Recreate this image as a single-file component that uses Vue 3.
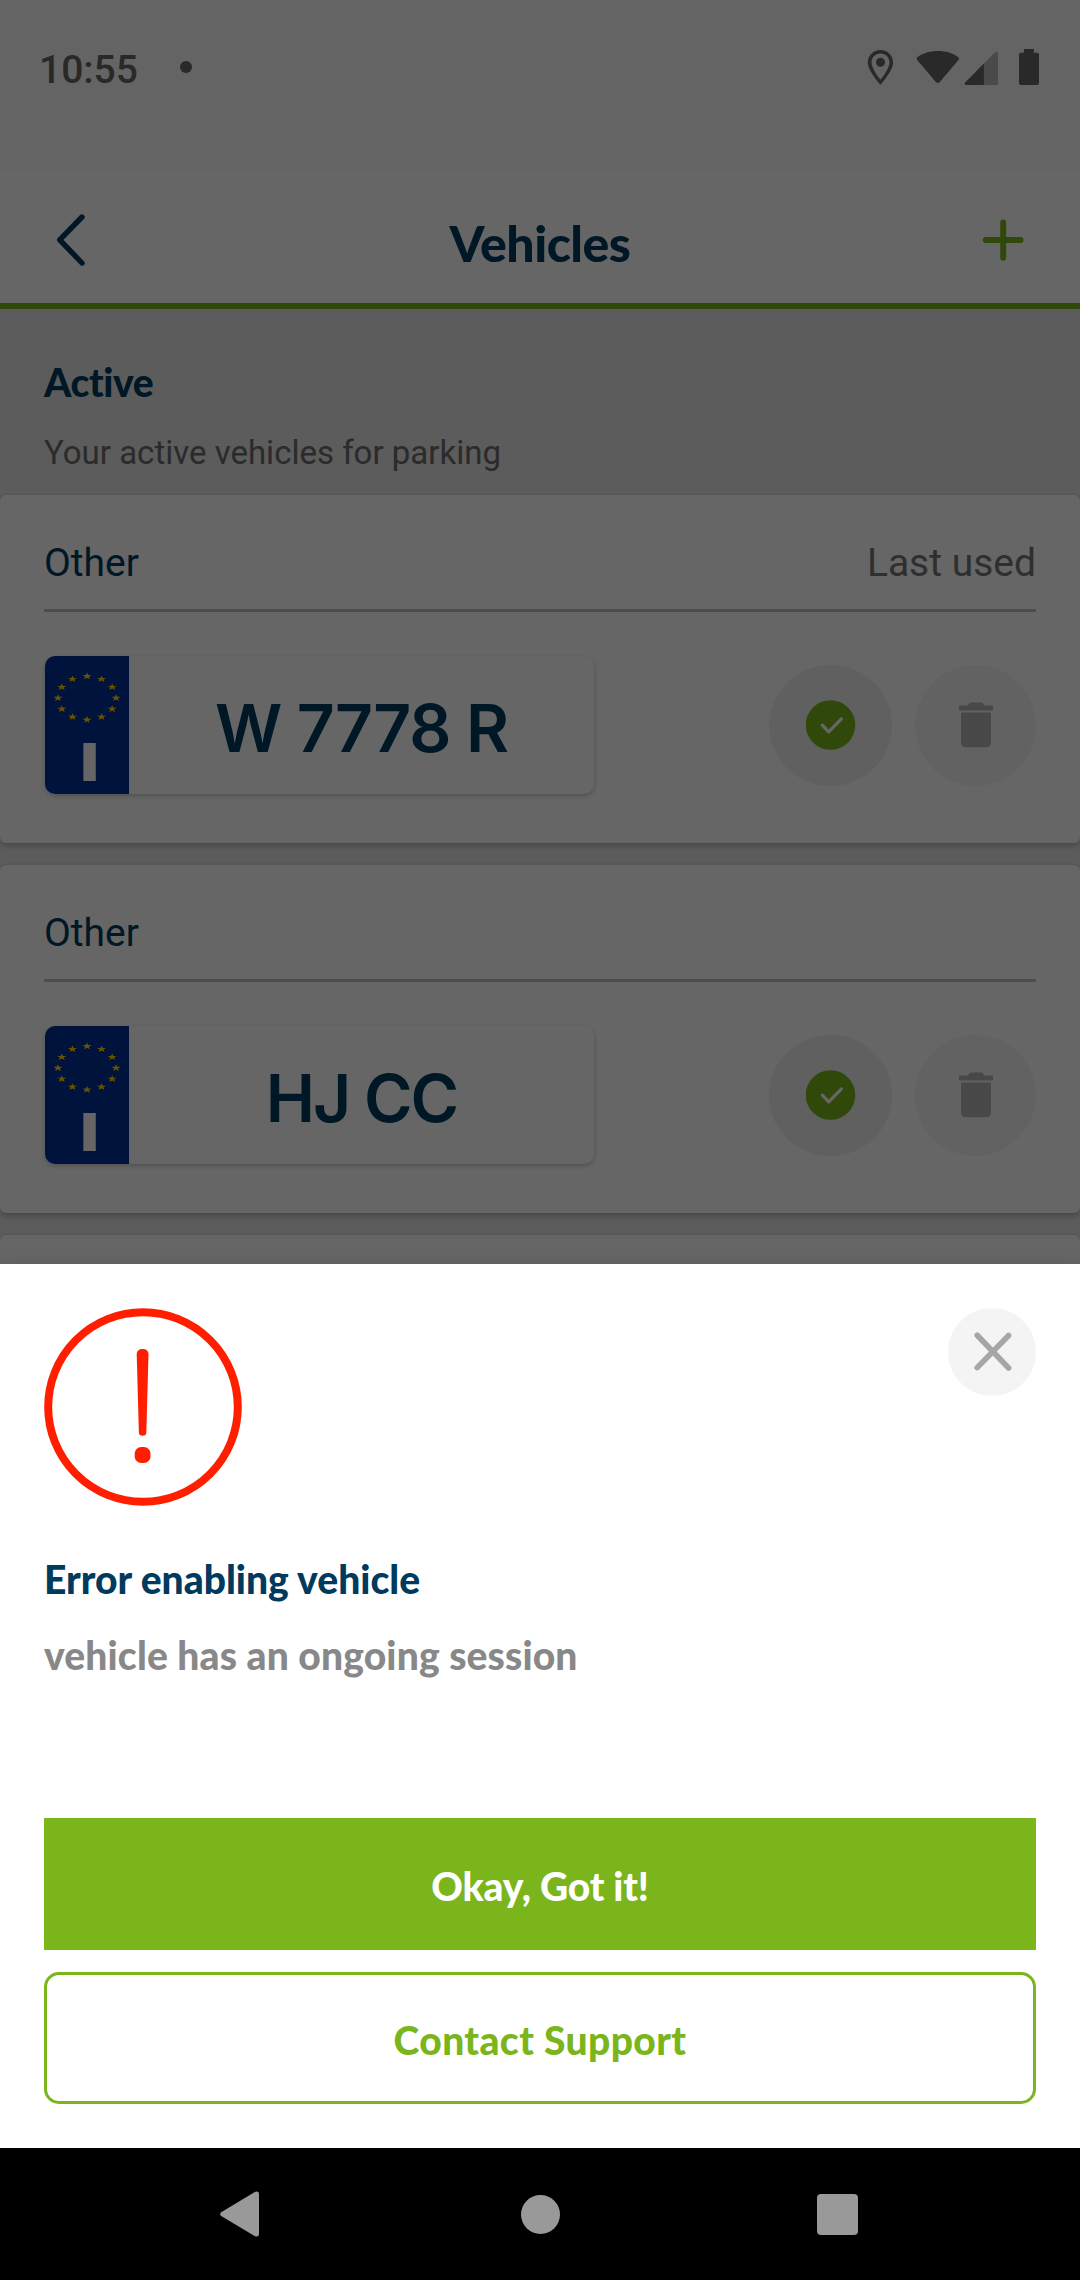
<script setup>
const vehicles = [
  { id: 1, label: 'Other', note: 'Last used', plate: 'W 7778 R', letter: '-1.1px' },
  { id: 2, label: 'Other', note: '', plate: 'HJ CC', letter: '-2px' }
]

const star = Array.from({ length: 10 }, (_, i) => {
  const r = i % 2 ? 1.5 : 3.7
  const a = (Math.PI / 5) * i - Math.PI / 2
  return `${(r * Math.cos(a)).toFixed(2)},${(r * Math.sin(a)).toFixed(2)}`
}).join(' ')

const stars = Array.from({ length: 12 }, (_, i) => {
  const a = (Math.PI / 6) * i
  return `translate(${(21.8 * Math.cos(a)).toFixed(2)} ${(21.8 * Math.sin(a)).toFixed(2)})`
})
</script>

<template>
  <div class="phone">
    <div class="screen">
      <div class="status">
        <div class="status-left">
          <span class="time">10:55</span>
          <i class="dot"></i>
        </div>
        <svg class="status-icons" width="180" height="44" viewBox="860 45 180 44">
          <path d="M880.5 50c-7 0-12.7 5.500-12.700 12.500 0 8.500 12.700 22.300 12.700 22.300s12.600-13.800 12.600-22.300c0-7-5.600-12.500-12.600-12.500zM880.500 53.600c5 0 9 4 9 8.900 0 5-5 12.200-9 17.300-4-5.100-9-12.300-9-17.300 0-4.900 4-8.900 9-8.900z" fill="#666" fill-rule="evenodd" />
          <circle cx="880.500" cy="62.200" r="4.500" fill="#666" />
          <path d="M917.300 57.200C928 49 948 49 958.300 57.200Q959.500 58.500 958.500 60L939.800 82Q937.800 84 935.800 82L917.200 60Q916 58.500 917.300 57.200Z" fill="#666" />
          <path d="M966 85Q963.800 84.500 965.200 82.400L994.800 52.400Q998 50.500 998 53.500V83.500Q998 85 996.500 85Z" fill="#b8b8b8" />
          <path d="M966 85Q963.800 84.500 965.200 82.400L983.900 63.500V85Z" fill="#666" />
          <path d="M1023.900 49h10v3.700h3.200q1.900 0 1.900 1.900v28.500q0 1.900-1.900 1.900h-16.200q-1.900 0-1.900-1.900V54.600q0-1.900 1.900-1.900h3z" fill="#666" />
        </svg>
      </div>

      <header class="header">
        <svg width="40" height="60" viewBox="50 210 40 60">
          <path d="M82 217L59.700 239.800L82 263" fill="none" stroke="#003a5d" stroke-width="5.400" stroke-linecap="round" stroke-linejoin="round" />
        </svg>
        <h1 class="title">Vehicles</h1>
        <svg width="60" height="60" viewBox="973 210 60 60">
          <path d="M985.800 240H1020.500M1003.200 222.500V257.700" fill="none" stroke="#79b51b" stroke-width="6" stroke-linecap="round" />
        </svg>
      </header>

      <section class="intro">
        <h2 class="intro-title">Active</h2>
        <p class="intro-text">Your active vehicles for parking</p>
      </section>

      <article v-for="v in vehicles" :key="v.id" class="card">
        <div class="card-head">
          <span class="label">{{ v.label }}</span>
          <span class="note">{{ v.note }}</span>
        </div>
        <div class="card-body">
          <div class="plate">
            <div class="band">
              <svg width="84" height="66" viewBox="-42 -33 84 66">
                <g transform="scale(1.333 1)">
                  <polygon v-for="(t, i) in stars" :key="i" :points="star" :transform="t" fill="#ffcc00" />
                </g>
              </svg>
              <span class="country">I</span>
            </div>
            <div class="number" :style="{ letterSpacing: v.letter }">{{ v.plate }}</div>
          </div>
          <div class="actions">
            <div class="round selected">
              <svg width="50" height="50" viewBox="0 0 50 50">
                <circle cx="24.500" cy="25" r="24.800" fill="#79b51b" />
                <path d="M16.300 25.200L22.700 31.800L35.400 18.900" fill="none" stroke="#fff" stroke-width="3.200" stroke-linecap="round" stroke-linejoin="round" />
              </svg>
            </div>
            <div class="round">
              <svg width="36" height="46" viewBox="0 0 36 46">
                <path d="M1 3.500H9.700L12.200 0.500H24L26.500 3.500H35V8.500H1ZM3 10.500H33V40.500Q33 45.300 28.200 45.300H7.800Q3 45.300 3 40.500Z" fill="#b4b4b4" />
              </svg>
            </div>
          </div>
        </div>
      </article>
      <article class="card next"></article>
    </div>

    <div class="scrim"></div>

    <section class="sheet">
      <div class="sheet-head">
        <svg width="198" height="198" viewBox="0 0 198 198">
          <circle cx="99" cy="99" r="94.800" fill="none" stroke="#ff1e00" stroke-width="8" />
          <path d="M92.700 46.500Q92.700 41 98.600 41Q104.500 41 104.500 46.500L102.300 125Q102 127.700 98.600 127.700Q95.200 127.700 94.900 125Z" fill="#ff1e00" />
          <rect x="90.700" y="139" width="15.800" height="16" rx="6.500" fill="#ff1e00" />
        </svg>
        <div class="close">
          <svg width="44" height="44" viewBox="970 1330 44 44">
            <path d="M977.200 1335.300L1008.600 1368M1008.600 1335.500L977.200 1367.600" fill="none" stroke="#a6a6a6" stroke-width="5.600" stroke-linecap="round" />
          </svg>
        </div>
      </div>
      <h2 class="error-title">Error enabling vehicle</h2>
      <p class="error-text">vehicle has an ongoing session</p>
      <div class="buttons">
        <button class="btn primary">Okay, Got it!</button>
        <button class="btn secondary">Contact Support</button>
      </div>
    </section>

    <nav class="nav">
      <svg width="40" height="46" viewBox="220 2191 40 46">
        <path d="M221.200 2212.300L254.800 2191.900Q259 2190.800 259 2194V2234Q259 2237.500 255 2236.200L221.200 2216Q219.300 2214.200 221.200 2212.300Z" fill="#999" />
      </svg>
      <i class="home"></i>
      <i class="recent"></i>
    </nav>
  </div>
</template>

<style>
body {
  margin: 0;
}
</style>

<style scoped>
.phone {
  position: relative;
  display: flex;
  flex-direction: column;
  width: 1080px;
  height: 2280px;
  overflow: hidden;
  background: #000;
  font-family: Roboto, sans-serif;
  font-variant-ligatures: none;
}

h1,
h2,
p {
  margin: 0;
}

svg {
  display: block;
}

.screen {
  height: 2148px;
  overflow: hidden;
  background: #e6e6e6;
}

.status {
  display: flex;
  justify-content: space-between;
  align-items: flex-start;
  box-sizing: border-box;
  height: 171px;
  padding: 45px 40px 0 39px;
  background: #fafafa;
}

.status-left {
  display: flex;
  gap: 42px;
  padding-top: 2px;
}

.time {
  color: #666;
  font-size: 39px;
  font-weight: 500;
  line-height: 46px;
}

.dot {
  width: 12px;
  height: 12px;
  margin-top: 14px;
  border-radius: 50%;
  background: #666;
}

.header {
  display: flex;
  justify-content: space-between;
  align-items: flex-start;
  box-sizing: border-box;
  height: 138px;
  padding: 39px 47px 0 50px;
  border-bottom: 6px solid #79b51b;
  background: #fff;
}

.title {
  margin: 3px 0 0 17px;
  color: #003a5d;
  font-family: Lato, sans-serif;
  font-size: 50px;
  font-weight: 900;
  line-height: 60px;
  letter-spacing: -0.5px;
}

.intro {
  padding: 50px 44px 23px;
}

.intro-title {
  margin-bottom: 28px;
  color: #003a5d;
  font-family: Lato, sans-serif;
  font-size: 39px;
  font-weight: 900;
  line-height: 46px;
  letter-spacing: -0.4px;
}

.intro-text {
  color: #6b6b6b;
  font-size: 33px;
  line-height: 39px;
}

.card {
  box-sizing: border-box;
  height: 348px;
  margin-bottom: 22px;
  padding: 45px 44px 0;
  border-radius: 6px;
  background: #fff;
  box-shadow: 0 3px 6px rgba(0, 0, 0, 0.22), 0 0 3px rgba(0, 0, 0, 0.1);
}

.next {
  margin-bottom: 0;
}

.card-head {
  display: flex;
  justify-content: space-between;
  padding-bottom: 23px;
  border-bottom: 3px solid #c0c0c0;
  font-size: 39px;
  line-height: 46px;
}

.label {
  color: #003a5d;
}

.note {
  color: #757575;
}

.card-body {
  display: flex;
  justify-content: space-between;
  align-items: center;
  padding: 44px 0 0 1px;
}

.plate {
  display: flex;
  width: 549px;
  height: 138px;
  overflow: hidden;
  border-radius: 10px;
  box-shadow: 0 2px 5px rgba(0, 0, 0, 0.22);
}

.band {
  display: flex;
  flex-direction: column;
  align-items: center;
  width: 84px;
  padding-top: 9px;
  background: #003099;
}

.country {
  margin-left: 6px;
  color: #fff;
  font-family: Inter, sans-serif;
  font-size: 52px;
  font-weight: 900;
  line-height: 63px;
  transform: scaleX(1.2);
}

.number {
  flex: 1;
  padding-top: 33px;
  color: #003a5d;
  font-family: Inter, sans-serif;
  font-size: 66px;
  font-weight: 600;
  line-height: 79px;
  text-align: center;
}

.actions {
  display: flex;
  gap: 23px;
}

.round {
  display: flex;
  justify-content: center;
  align-items: center;
  width: 121px;
  height: 121px;
  border-radius: 50%;
  background: #f5f5f5;
}

.selected {
  width: 123px;
  background: #efefef;
}

.scrim {
  position: absolute;
  inset: 0 0 132px;
  background: rgba(0, 0, 0, 0.6);
}

.sheet {
  position: absolute;
  left: 0;
  right: 0;
  bottom: 132px;
  display: flex;
  flex-direction: column;
  box-sizing: border-box;
  height: 884px;
  padding: 44px;
  background: #fff;
  box-shadow: 0 0 24px rgba(0, 0, 0, 0.1);
}

.sheet-head {
  display: flex;
  justify-content: space-between;
  align-items: flex-start;
}

.close {
  display: flex;
  justify-content: center;
  align-items: center;
  width: 88px;
  height: 88px;
  border-radius: 50%;
  background: #f4f4f4;
}

.error-title,
.error-text {
  font-family: Lato, sans-serif;
  font-size: 39px;
  font-weight: 900;
  line-height: 46px;
}

.error-title {
  margin-top: 50px;
  color: #003a5d;
}

.error-text {
  margin-top: 30px;
  color: #888;
  letter-spacing: 0.14px;
}

.buttons {
  display: flex;
  flex-direction: column;
  gap: 22px;
  margin-top: auto;
}

.btn {
  box-sizing: border-box;
  height: 132px;
  padding: 4px 0 0;
  border: 0;
  font-family: Lato, sans-serif;
  font-size: 39px;
  font-weight: 900;
  line-height: 46px;
  font-variant-ligatures: none;
}

.primary {
  background: #79b51b;
  color: #fff;
  letter-spacing: -0.2px;
}

.secondary {
  border: 3px solid #79b51b;
  border-radius: 15px;
  background: #fff;
  color: #79b51b;
  letter-spacing: 0.4px;
}

.nav {
  display: flex;
  justify-content: space-between;
  align-items: center;
  box-sizing: border-box;
  height: 132px;
  padding: 0 222px 0 220px;
  background: #000;
}

.home {
  width: 39px;
  height: 39px;
  margin-left: 3px;
  border-radius: 50%;
  background: #999;
}

.recent {
  width: 41px;
  height: 41px;
  border-radius: 4px;
  background: #999;
}
</style>
